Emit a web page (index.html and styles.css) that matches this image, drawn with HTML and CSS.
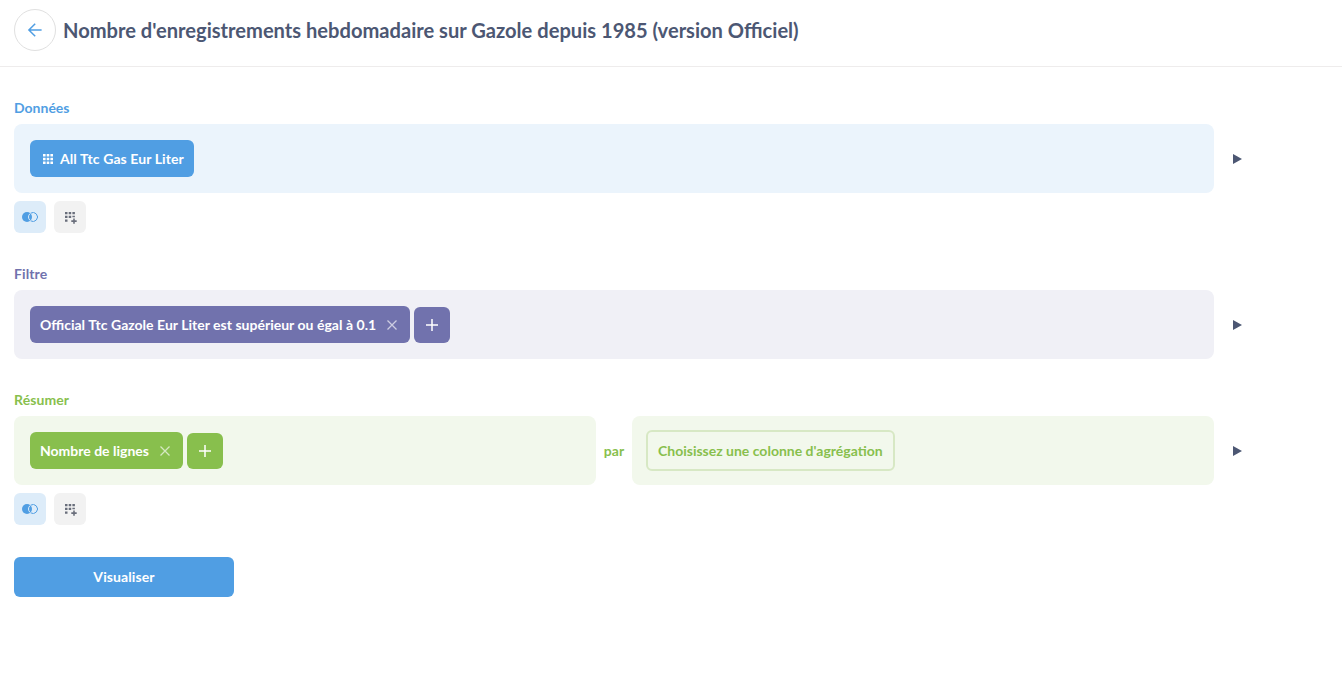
FILE: index.html
```html
<!DOCTYPE html>
<html lang="fr">
<head>
<meta charset="utf-8">
<title>Nombre d'enregistrements hebdomadaire</title>
<link rel="stylesheet" href="styles.css">
</head>
<body>
<svg class="defs" width="0" height="0" aria-hidden="true">
  <symbol id="play" viewBox="0 0 9 10"><path d="M0 0 9 5 0 10Z" fill="currentColor"/></symbol>
  <symbol id="close" viewBox="0 0 10 10"><path d="M.5.5l9 9M9.500.5l-9 9" stroke="currentColor" stroke-width="1.3" fill="none"/></symbol>
  <symbol id="plus" viewBox="0 0 12 12"><path d="M6 0v12M0 6h12" stroke="currentColor" stroke-width="1.5" fill="none"/></symbol>
  <symbol id="join" viewBox="0 0 16 10"><circle cx="5" cy="5" r="5" fill="currentColor"/><circle cx="11" cy="5" r="4.500" fill="none" stroke="#ddecf9" stroke-width="1"/><path d="M8.500 1.250A4.500 4.500 0 1 1 8.500 8.750" fill="none" stroke="currentColor" stroke-width="1"/></symbol>
  <symbol id="column" viewBox="0 0 13 13"><path d="M1 1h2.500v2.300H1zM4.700 1h2.500v2.300H4.700zM8.400 1h2.500v2.300H8.400zM1 4.700h2.500V7H1zM4.700 4.700h2.500V7H4.700zM8.400 4.700h2.500v1.600H8.400zM1 8.400h2.500v2.300H1zM9.200 7.400h1.600v1.900h1.900v1.600h-1.900v1.900H9.200v-1.900H7.300V9.300h1.900z" fill="currentColor"/></symbol>
</svg>
<header class="header">
  <button class="back" aria-label="Retour"><svg width="14" height="14" viewBox="0 0 14 14"><path d="M7.200.700.900 7l6.300 6.300M1 7h12.600" fill="none" stroke="currentColor" stroke-width="1.500"/></svg></button>
  <h1 class="title">Nombre d'enregistrements hebdomadaire sur Gazole depuis 1985 (version Officiel)</h1>
</header>
<main class="notebook">
  <section class="step blue">
    <h2 class="label">Données</h2>
    <div class="row">
      <div class="panel"><button class="pill table"><svg width="10" height="10" viewBox="0 0 10 10"><path d="M0 0h2.600v2.600H0zM3.700 0h2.600v2.600H3.700zM7.400 0H10v2.600H7.400zM0 3.700h2.600v2.600H0zM3.700 3.700h2.600v2.600H3.700zM7.400 3.700H10v2.600H7.400zM0 7.400h2.600V10H0zM3.700 7.400h2.600V10H3.700zM7.400 7.400H10V10H7.400z" fill="currentColor"/></svg>All Ttc Gas Eur Liter</button></div>
      <svg class="play" width="9" height="10"><use href="#play"/></svg>
    </div>
    <div class="actions">
      <button class="action join"><svg width="16" height="10"><use href="#join"/></svg></button>
      <button class="action"><svg width="13" height="13"><use href="#column"/></svg></button>
    </div>
  </section>
  <section class="step purple">
    <h2 class="label">Filtre</h2>
    <div class="row">
      <div class="panel"><button class="pill filter">Official Ttc Gazole Eur Liter est supérieur ou égal à 0.1<svg class="close" width="10" height="10"><use href="#close"/></svg></button><button class="pill add"><svg width="12" height="12"><use href="#plus"/></svg></button></div>
      <svg class="play" width="9" height="10"><use href="#play"/></svg>
    </div>
  </section>
  <section class="step green">
    <h2 class="label">Résumer</h2>
    <div class="row">
      <div class="panel"><button class="pill">Nombre de lignes<svg class="close" width="10" height="10"><use href="#close"/></svg></button><button class="pill add"><svg width="12" height="12"><use href="#plus"/></svg></button></div>
      <span class="by">par</span>
      <div class="panel grouping"><button class="pill outline">Choisissez une colonne d'agrégation</button></div>
      <svg class="play" width="9" height="10"><use href="#play"/></svg>
    </div>
    <div class="actions">
      <button class="action join"><svg width="16" height="10"><use href="#join"/></svg></button>
      <button class="action"><svg width="13" height="13"><use href="#column"/></svg></button>
    </div>
  </section>
  <button class="visualize">Visualiser</button>
</main>
</body>
</html>
```
FILE: styles.css
```css
* { box-sizing: border-box; }
body { margin: 0; background: #fff; color: #4c5773; font-family: Lato, sans-serif; font-size: 14px; font-weight: 700; }
.defs { display: none; }
button { font: inherit; border: 0; margin: 0; padding: 0; display: flex; align-items: center; }
svg { flex: none; display: block; overflow: visible; }
.header { height: 67px; padding: 9px 14px 0; display: flex; align-items: flex-start; gap: 7px; border-bottom: 1px solid #eeecec; }
.back { width: 42px; height: 42px; flex: none; justify-content: center; border: 1px solid #e0e0e0; border-radius: 50%; background: #fff; color: #509ee3; }
.title { margin: 0; font-size: 20.11px; line-height: 42px; white-space: nowrap; }
.notebook { padding: 32px 14px 0; }
.step { margin-bottom: 32px; }
.label { margin: 0 0 8px; font-size: 14px; line-height: 17px; color: var(--tone); }
.purple .label, .green .label { letter-spacing: .1px; }
.blue { --tone: #509ee3; --tint: #ebf4fc; }
.purple { --tone: #7172ad; --tint: #f0f0f6; }
.green { --tone: #88bf4d; --tint: #f2f8ec; }
.row { width: 1229px; display: flex; align-items: center; }
.panel { flex: 1 1 0; height: 69px; padding: 0 16px; display: flex; align-items: center; gap: 4px; border-radius: 8px; background: var(--tint); }
.pill { height: 37px; padding: 0 10px; border-radius: 6px; background: var(--tone); color: #fff; white-space: nowrap; }
.table { gap: 7px; padding-left: 13px; letter-spacing: .09px; }
.filter { word-spacing: .1px; }
.close { margin: 0 3px 0 11px; opacity: .65; }
.add { width: 36px; height: 36px; padding: 0; justify-content: center; margin-top: 1px; }
.by { width: 36px; text-align: center; color: var(--tone); }
.green .panel { flex: 0 0 582px; }
.grouping { padding: 0 14px; }
.outline { height: 41px; border: 2px solid #d7e8c4; background: transparent; color: var(--tone); }
.play { margin-left: 19px; margin-right: 1px; }
.actions { margin-top: 8px; display: flex; gap: 8px; }
.action { width: 32px; height: 32px; justify-content: center; border-radius: 6px; background: #f2f2f2; color: #696e7b; }
.join { background: #ddecf9; color: #509ee3; }
.visualize { width: 220px; height: 40px; padding-bottom: 1px; justify-content: center; border-radius: 6px; background: #509ee3; color: #fff; letter-spacing: .1px; }
```
